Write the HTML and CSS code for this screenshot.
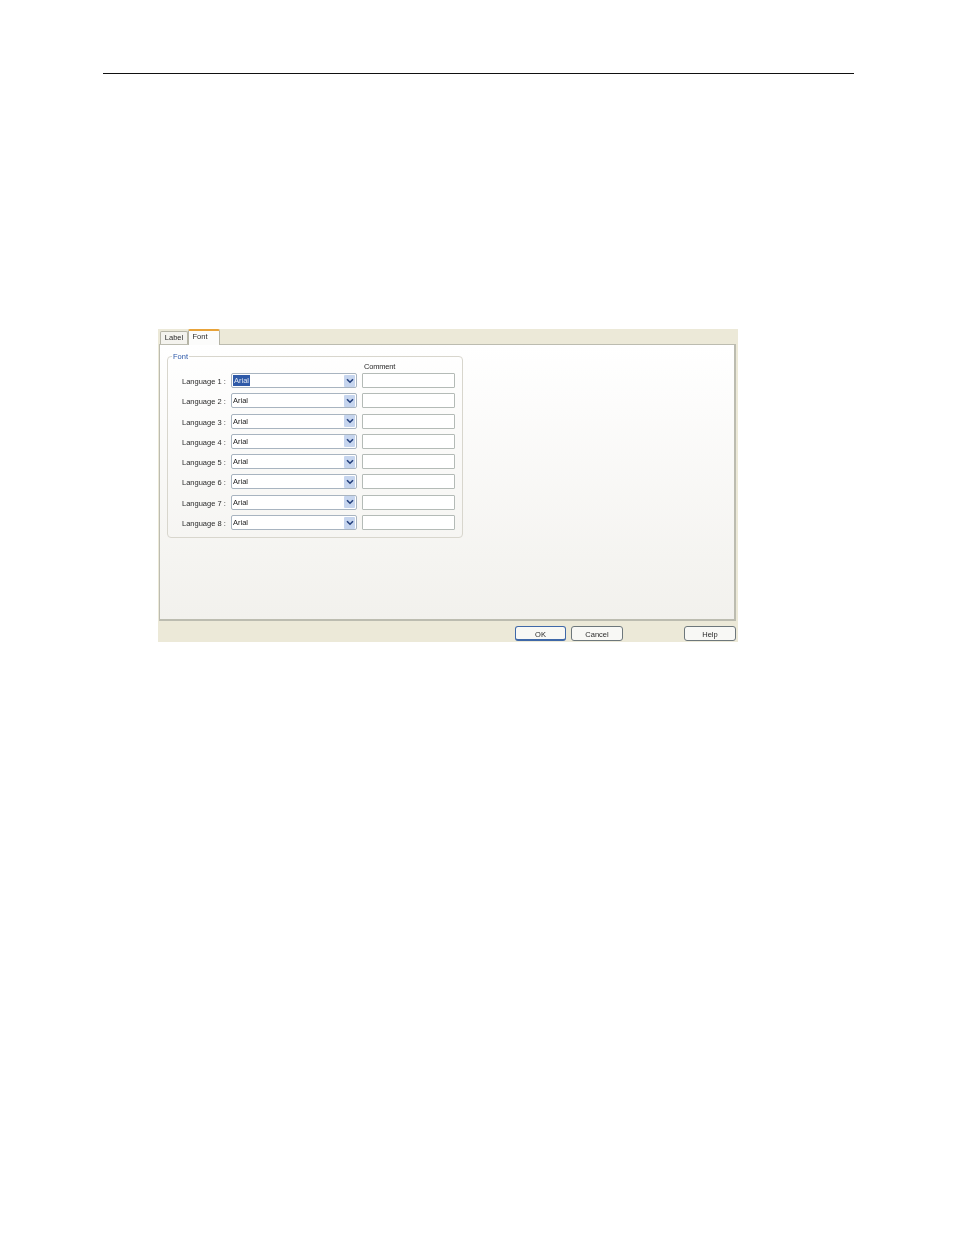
FILE: index.html
```html
<!DOCTYPE html>
<html lang="en">
<head>
  <meta charset="UTF-8">
  <title>Font settings</title>
  <link rel="stylesheet" href="styles.css">
</head>
<body>
  <div class="rule"></div>

  <!-- Dialog -->
  <div class="dialog">
    <div class="tabs">
      <div class="tab">Label</div>
      <div class="tab active">Font</div>
    </div>
    <div class="panel">
      <fieldset class="group">
        <legend>Font</legend>
        <div class="comment-head">Comment</div>
        <div class="row">
          <span class="lang">Language 1 :</span>
          <div class="combo"><span class="value"><span class="selected">Arial</span></span><span class="arrow"><svg viewBox="0 0 8 6" width="8" height="6"><path d="M1 1.2 L4 4.2 L7 1.2" fill="none" stroke="#24407e" stroke-width="1.6"/></svg></span></div>
          <div class="field"></div>
        </div>
        <div class="row">
          <span class="lang">Language 2 :</span>
          <div class="combo"><span class="value">Arial</span><span class="arrow"><svg viewBox="0 0 8 6" width="8" height="6"><path d="M1 1.2 L4 4.2 L7 1.2" fill="none" stroke="#24407e" stroke-width="1.6"/></svg></span></div>
          <div class="field"></div>
        </div>
        <div class="row">
          <span class="lang">Language 3 :</span>
          <div class="combo"><span class="value">Arial</span><span class="arrow"><svg viewBox="0 0 8 6" width="8" height="6"><path d="M1 1.2 L4 4.2 L7 1.2" fill="none" stroke="#24407e" stroke-width="1.6"/></svg></span></div>
          <div class="field"></div>
        </div>
        <div class="row">
          <span class="lang">Language 4 :</span>
          <div class="combo"><span class="value">Arial</span><span class="arrow"><svg viewBox="0 0 8 6" width="8" height="6"><path d="M1 1.2 L4 4.2 L7 1.2" fill="none" stroke="#24407e" stroke-width="1.6"/></svg></span></div>
          <div class="field"></div>
        </div>
        <div class="row">
          <span class="lang">Language 5 :</span>
          <div class="combo"><span class="value">Arial</span><span class="arrow"><svg viewBox="0 0 8 6" width="8" height="6"><path d="M1 1.2 L4 4.2 L7 1.2" fill="none" stroke="#24407e" stroke-width="1.6"/></svg></span></div>
          <div class="field"></div>
        </div>
        <div class="row">
          <span class="lang">Language 6 :</span>
          <div class="combo"><span class="value">Arial</span><span class="arrow"><svg viewBox="0 0 8 6" width="8" height="6"><path d="M1 1.2 L4 4.2 L7 1.2" fill="none" stroke="#24407e" stroke-width="1.6"/></svg></span></div>
          <div class="field"></div>
        </div>
        <div class="row">
          <span class="lang">Language 7 :</span>
          <div class="combo"><span class="value">Arial</span><span class="arrow"><svg viewBox="0 0 8 6" width="8" height="6"><path d="M1 1.2 L4 4.2 L7 1.2" fill="none" stroke="#24407e" stroke-width="1.6"/></svg></span></div>
          <div class="field"></div>
        </div>
        <div class="row">
          <span class="lang">Language 8 :</span>
          <div class="combo"><span class="value">Arial</span><span class="arrow"><svg viewBox="0 0 8 6" width="8" height="6"><path d="M1 1.2 L4 4.2 L7 1.2" fill="none" stroke="#24407e" stroke-width="1.6"/></svg></span></div>
          <div class="field"></div>
        </div>
      </fieldset>
    </div>
    <div class="buttons">
      <div class="btn default">OK</div>
      <div class="btn">Cancel</div>
      <div class="btn help">Help</div>
    </div>
  </div>
</body>
</html>
```

FILE: styles.css
```css
body {
  margin: 0;
  background-color: #ffffff;
  font-family: "Liberation Sans", Arial, sans-serif;
  font-size: 7.5px;
  color: #2a2a2a;
}
.rule {
  height: 1px;
  width: 751px;
  margin: 73px 0 0 103px;
  background-color: #111111;
}
.dialog {
  width: 580px;
  height: 313px;
  margin: 255px 0 0 158px;
  background-color: #ece9d8;
  display: flex;
  flex-direction: column;
  filter: blur(0.4px);
}
.tabs {
  height: 15px;
  display: flex;
  align-items: flex-end;
  padding-left: 2px;
  position: relative;
  z-index: 1;
}
.tab {
  width: 28px;
  height: 13px;
  box-sizing: border-box;
  padding-top: 1px;
  text-align: center;
  background-color: #f4f3ee;
  border: 1px solid #b5b4a6;
  border-bottom: none;
  border-radius: 2px 2px 0 0;
}
.tab.active {
  width: 32px;
  height: 16px;
  margin-bottom: -1px;
  padding: 1px 8px 0 0;
  background-color: #fcfcfb;
  border-top: 2px solid #e8a33a;
}
.panel {
  width: 577px;
  height: 277px;
  margin-left: 1px;
  box-sizing: border-box;
  padding: 7px 0 0 7px;
  border: 1px solid #bcbcb0;
  border-right-width: 2px;
  border-bottom-width: 2px;
  background: linear-gradient(to bottom, #ffffff, #f2f1ed);
}
.group {
  width: 296px;
  height: 186px;
  box-sizing: border-box;
  margin: 0;
  padding: 0;
  border: 1px solid #d8d6cd;
  border-radius: 4px;
}
.group legend {
  margin-left: 4px;
  padding: 0 1px;
  color: #2b57a8;
  line-height: 9px;
}
.comment-head {
  height: 9px;
  margin: 1px 0 2px 196px;
  line-height: 9px;
  letter-spacing: -0.2px;
  white-space: nowrap;
}
.row {
  display: flex;
  align-items: center;
  height: 15px;
  margin-bottom: 5.3px;
}
.lang {
  width: 49px;
  margin-left: 14px;
  padding-top: 2px;
  white-space: nowrap;
}
.combo {
  width: 126px;
  height: 15px;
  box-sizing: border-box;
  display: flex;
  align-items: center;
  justify-content: space-between;
  padding: 0 1px 0 1px;
  background-color: #ffffff;
  border: 1px solid #a8b4c0;
  border-radius: 2px;
  color: #222222;
}
.selected {
  padding: 1px;
  background-color: #2f5aa8;
  color: #dfe6f2;
}
.arrow {
  width: 11px;
  height: 12px;
  display: flex;
  align-items: center;
  justify-content: center;
  background-color: #c6d5ee;
  border-radius: 1px;
}
.field {
  width: 93px;
  height: 15px;
  box-sizing: border-box;
  margin-left: 5px;
  background-color: #ffffff;
  border: 1px solid #b4bbb7;
  border-radius: 1px;
}
.buttons {
  flex: 1;
  display: flex;
  gap: 5px;
  align-items: flex-end;
  padding: 0 2px 1px 357px;
}
.btn {
  width: 52px;
  height: 15px;
  box-sizing: border-box;
  text-align: center;
  line-height: 15px;
  background-color: #f8f8f5;
  border: 1px solid #6d777b;
  border-radius: 3px;
}
.btn.default {
  width: 51px;
  border-color: #3f68a8;
  border-width: 1px 1px 2px;
}
.btn.help {
  margin-left: 56px;
}
```
